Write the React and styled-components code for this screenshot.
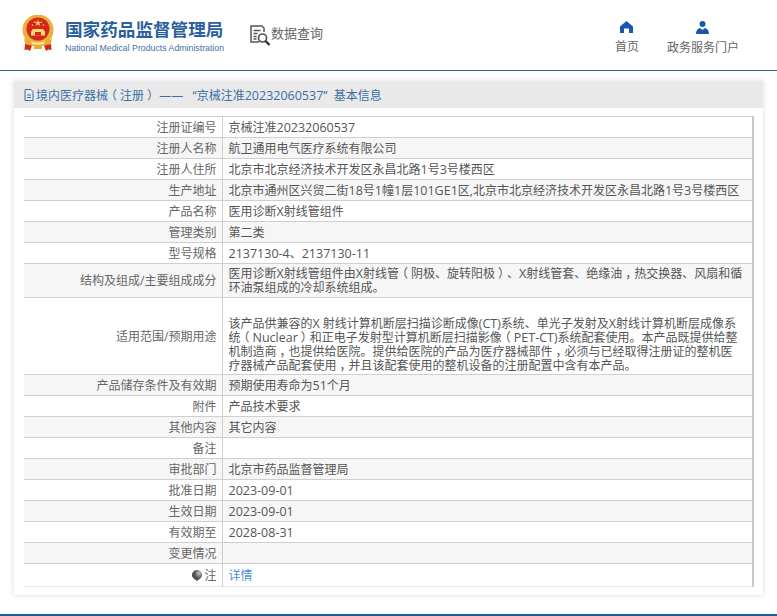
import React from 'react';
import styled, { createGlobalStyle } from 'styled-components';

const GlobalStyle = createGlobalStyle`
  html, body {
    margin: 0;
    padding: 0;
    background: #fff;
    font-family: "Open Sans", "Noto Sans CJK SC", sans-serif;
  }
`;
const Page = styled.div`
  width: 777px;
  height: 616px;
  overflow: hidden;
  display: flex;
  flex-direction: column;
`;
const Header = styled.div`
  height: 70px;
  flex-shrink: 0;
  border-bottom: 1px solid #1f66ad;
  display: flex;
  align-items: flex-start;
  padding-left: 22px;
`;
const Logo = styled.div`
  display: flex;
  align-items: flex-start;
  margin-top: 15px;
`;
const LogoText = styled.div`
  margin-left: 11px;
  margin-top: 4px;
`;
const LogoTitle = styled.div`
  font-size: 17.6px;
  line-height: 20px;
  font-weight: 700;
  color: #2a5f9e;
  white-space: nowrap;
`;
const LogoSub = styled.div`
  font-family: "Liberation Sans", sans-serif;
  font-size: 8.75px;
  line-height: 12px;
  margin-top: 3px;
  color: #3f6fa8;
  white-space: nowrap;
`;
const Query = styled.div`
  display: flex;
  align-items: flex-start;
  margin-left: 26px;
  margin-top: 22px;
  font-size: 13px;
  line-height: 22px;
  color: #666;
`;
const QueryMark = styled.span`
  display: block;
  height: 21px;
  margin-top: 3px;
`;
const Nav = styled.div`
  margin-left: auto;
  margin-right: 38px;
  margin-top: 21px;
  display: flex;
  gap: 28px;
`;
const NavItem = styled.div`
  display: flex;
  flex-direction: column;
  align-items: center;
  font-size: 12px;
  line-height: 16px;
  color: #666;
  gap: 6px;
`;
const Panel = styled.div`
  margin: 10px 14px 0;
  height: 514px;
  background: #fff;
  box-shadow: 0 0 6px rgba(0, 0, 0, 0.14);
  display: flex;
  flex-direction: column;
`;
const PanelTitle = styled.div`
  height: 27px;
  flex-shrink: 0;
  background: #e9e9e9;
  display: flex;
  align-items: center;
  padding-left: 10px;
  font-size: 12px;
  color: #3b6ea5;
  white-space: pre;
`;
const TitleText = styled.span`
  margin-left: 2px;
`;
const TableWrap = styled.div`
  margin: 8px 9px 0 10px;
  border-right: 2px solid #c8c8c8;
  height: 471px;
`;
const Table = styled.table`
  width: 100%;
  border-collapse: collapse;
  table-layout: fixed;
  border-top: 1px solid #cfcfcf;
`;
const Row = styled.tr`
  background: ${(props) => (props.$alt ? '#f6f6f6' : '#fff')};
  height: ${(props) => props.$h || 21}px;
  border-bottom: 1px solid ${(props) => (props.$last ? '#e8e8e8' : '#cfcfcf')};
`;
const Label = styled.td`
  width: 198px;
  padding: 1px 5px 0 0;
  box-sizing: border-box;
  text-align: right;
  font-size: 12px;
  line-height: 14px;
  color: #666;
  border-right: 1px solid #cfcfcf;
  white-space: nowrap;
`;
const Value = styled.td`
  padding: ${(props) => (props.$blankLine ? '17px' : '1px')} 0 0 6px;
  font-size: 12px;
  line-height: 14px;
  color: #555;
  white-space: pre-line;
`;
const Latin = styled.span`
  font-size: 12.5px;
`;
// the reference font centres these in their full-width box
const Punct = styled.span`
  display: inline-block;
  width: 1em;
  transform: translateX(${(props) => props.$shift}px);
`;
const Link = styled.a`
  color: #4a90d9;
  text-decoration: none;
  font-size: 12px;
`;
const NoteMark = styled.span`
  display: inline-block;
  margin-right: 2px;
  vertical-align: -1px;
  line-height: 0;
`;
const Footer = styled.div`
  margin-top: auto;
  height: 2px;
  background: #1f5a9c;
  flex-shrink: 0;
`;

const rows = [
  ['注册证编号', '京械注准20232060537'],
  ['注册人名称', '航卫通用电气医疗系统有限公司'],
  ['注册人住所', '北京市北京经济技术开发区永昌北路1号3号楼西区'],
  ['生产地址', '北京市通州区兴贸二街18号1幢1层101GE1区,北京市北京经济技术开发区永昌北路1号3号楼西区'],
  ['产品名称', '医用诊断X射线管组件'],
  ['管理类别', '第二类'],
  ['型号规格', '2137130-4、2137130-11'],
  ['结构及组成/主要组成成分', '医用诊断X射线管组件由X射线管（阴极、旋转阳极）、X射线管套、绝缘油，热交换器、风扇和循\n环油泵组成的冷却系统组成。', 34],
  ['适用范围/预期用途', '该产品供兼容的X 射线计算机断层扫描诊断成像(CT)系统、单光子发射及X射线计算机断层成像系\n统（Nuclear）和正电子发射型计算机断层扫描影像（PET-CT)系统配套使用。本产品既提供给整\n机制造商，也提供给医院。提供给医院的产品为医疗器械部件，必须与已经取得注册证的整机医\n疗器械产品配套使用，并且该配套使用的整机设备的注册配置中含有本产品。', 77],
  ['产品储存条件及有效期', '预期使用寿命为51个月'],
  ['附件', '产品技术要求'],
  ['其他内容', '其它内容'],
  ['备注', ''],
  ['审批部门', '北京市药品监督管理局'],
  ['批准日期', '2023-09-01'],
  ['生效日期', '2023-09-01'],
  ['有效期至', '2028-08-31'],
  ['变更情况', ''],
];

const shifts = { '（': -3, '）': 3, '，': 3 };

// latin runs sit a little larger than the CJK text, full-width punctuation gets centred
const withLatin = (text) =>
  text.split(/([A-Za-z0-9-]+|[（），])/).map((part, i) => {
    if (i % 2 === 0) return part;
    if (shifts[part]) return <Punct key={i} $shift={shifts[part]}>{part}</Punct>;
    return <Latin key={i}>{part}</Latin>;
  });

const Emblem = () => (
  <svg width="32" height="36" viewBox="0 0 32 36">
    <circle cx="16" cy="15" r="15.500" fill="#eab03a" />
    <circle cx="16" cy="14" r="11.500" fill="#d5261c" />
    <path d="M16 4.500l.9 2.400 2.500.1-2 1.600.7 2.400-2.100-1.400-2.100 1.400.7-2.400-2-1.600 2.500-.1z" fill="#f7d558" />
    <circle cx="10.500" cy="10" r=".8" fill="#f7d558" />
    <circle cx="21.500" cy="10" r=".8" fill="#f7d558" />
    <circle cx="12.500" cy="7" r=".7" fill="#f7d558" />
    <circle cx="19.500" cy="7" r=".7" fill="#f7d558" />
    <path d="M11 14h10l2 2.500v4H9v-4z" fill="#f4d878" />
    <path d="M13 17h6v3.500h-6z" fill="#d5261c" />
    <path d="M2 23c4 5.500 24 5.500 28 0l-1 5.500c-7 3.500-19 3.500-26 0z" fill="#e9ab2e" />
    <path d="M9 26c3 2 11 2 14 0l-1 3c-3 1-9 1-12 0z" fill="#fbe7a6" />
    <path d="M3 29l7 1.500-2 5.500-2.500-1.500-3 .5zM29 29l-7 1.500 2 5.500 2.500-1.500 3 .5z" fill="#d5261c" />
    <path d="M12 31h8v3h-8z" fill="#e9ab2e" />
  </svg>
);

const QueryIcon = () => (
  <svg width="21" height="21" viewBox="0 0 21 21" fill="none" stroke="#555">
    <path d="M9 17H1V1h11l2 2v4" strokeWidth="1.500" />
    <path d="M3.500 5.500h7M3.500 8.500h4M3.500 11.500h3M3.500 14h3" strokeWidth="1.300" />
    <circle cx="12.500" cy="13" r="4" strokeWidth="1.700" />
    <path d="M15.500 16l4 4" strokeWidth="2.400" stroke="#333" />
  </svg>
);

const HomeIcon = () => (
  <svg width="13" height="12" viewBox="0 0 13 12" fill="#1558ad">
    <path d="M6.500 0L13 5.600V12H9V7.600H4V12H0V5.600z" />
  </svg>
);

const UserIcon = () => (
  <svg width="13" height="13" viewBox="0 0 13 13" fill="#1558ad">
    <circle cx="6.500" cy="3" r="3" />
    <path d="M0 13c0-3 1.500-5.500 4-6l2.500 2L9 7c2.500.5 4 3 4 6z" />
  </svg>
);

const DocIcon = () => (
  <svg width="10" height="12" viewBox="0 0 10 12" fill="none" stroke="#3b6ea5">
    <path d="M1 .5h6l2 2v9H1zM3 6h4M3 8.500h4" />
  </svg>
);

const NoteIcon = () => (
  <svg width="10" height="11" viewBox="0 0 10 11">
    <defs>
      <radialGradient id="note" cx="0.7" cy="0.3" r="0.9">
        <stop offset="0" stopColor="#c4c4c4" />
        <stop offset="0.5" stopColor="#555" />
        <stop offset="1" stopColor="#333" />
      </radialGradient>
    </defs>
    <path d="M5 0a5 5 0 0 1 5 5c0 3-3 4-5 6-2-2-5-3-5-6a5 5 0 0 1 5-5z" fill="url(#note)" />
  </svg>
);

export default function App() {
  return (
    <Page>
      <GlobalStyle />
      <Header>
        <Logo>
          <Emblem />
          <LogoText>
            <LogoTitle>国家药品监督管理局</LogoTitle>
            <LogoSub>National Medical Products Administration</LogoSub>
          </LogoText>
        </Logo>
        <Query>
          <QueryMark>
            <QueryIcon />
          </QueryMark>
          数据查询
        </Query>
        <Nav>
          <NavItem>
            <HomeIcon />
            首页
          </NavItem>
          <NavItem>
            <UserIcon />
            政务服务门户
          </NavItem>
        </Nav>
      </Header>
      <Panel>
        <PanelTitle>
          <DocIcon />
          <TitleText>{withLatin('境内医疗器械（注册） ——   “京械注准20232060537”  基本信息')}</TitleText>
        </PanelTitle>
        <TableWrap>
          <Table>
            <tbody>
              {rows.map(([label, value, h], i) => (
                <Row key={label} $alt={i % 2 === 1} $h={h}>
                  <Label>{label}</Label>
                  <Value $blankLine={h === 77}>{withLatin(value)}</Value>
                </Row>
              ))}
              <Row $h={23} $last>
                <Label>
                  <NoteMark>
                    <NoteIcon />
                  </NoteMark>
                  注
                </Label>
                <Value>
                  <Link href="#">详情</Link>
                </Value>
              </Row>
            </tbody>
          </Table>
        </TableWrap>
      </Panel>
      <Footer />
    </Page>
  );
}
